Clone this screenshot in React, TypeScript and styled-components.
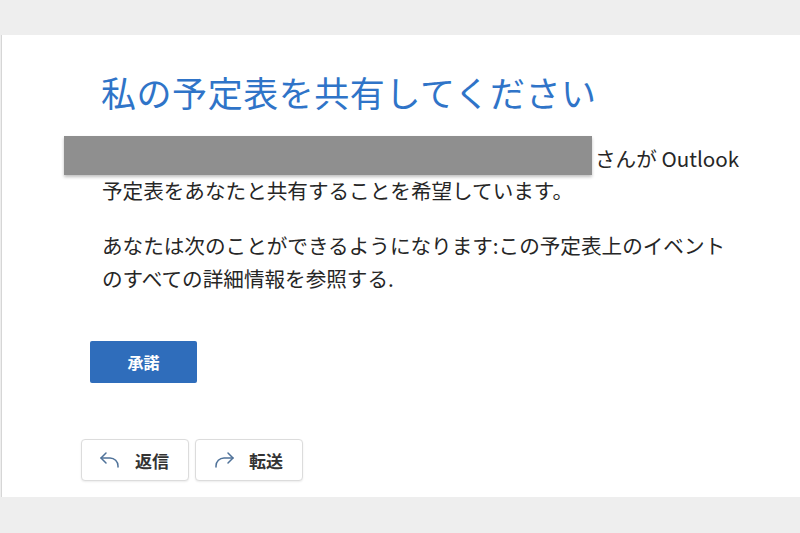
import styled, { createGlobalStyle } from "styled-components";

const GlobalStyle = createGlobalStyle`
  html, body {
    margin: 0;
    padding: 0;
    background: #eeeeee;
  }
  body {
    font-family: "Noto Sans CJK JP", "Noto Sans", sans-serif;
  }
`;

export default function App() {
  return (
    <>
      <GlobalStyle />
      <Page>
        <Card>
          <Title>私の予定表を共有してください</Title>
          <Paragraph>
            <Redacted />
            さんが Outlook
            <br />
            予定表をあなたと共有することを希望しています。
          </Paragraph>
          <Paragraph $gap={23} $lh={33}>
            あなたは次のことができるようになります:この予定表上のイベント
            <br />
            のすべての詳細情報を参照する.
          </Paragraph>
          <AcceptButton>承諾</AcceptButton>
          <Actions>
            <ActionButton>
              <ArrowIcon dir="back" />
              返信
            </ActionButton>
            <ActionButton>
              <ArrowIcon dir="forward" />
              転送
            </ActionButton>
          </Actions>
        </Card>
      </Page>
    </>
  );
}

function ArrowIcon({ dir }: { dir: "back" | "forward" }) {
  const flip = dir === "forward" ? "scale(-1 1) translate(-24 0)" : undefined;
  return (
    <svg
      width="24"
      height="24"
      viewBox="0 0 24 24"
      fill="none"
      stroke="#4f7299"
      strokeWidth="1.5"
      strokeLinecap="round"
      strokeLinejoin="round"
    >
      <g transform={flip}>
        <path d="M8 5 L3 10 L8 15" />
        <path d="M3 10 H12 a8 8 0 0 1 8 8 v1" />
      </g>
    </svg>
  );
}

const Page = styled.div`
  width: 800px;
  height: 533px;
  padding-top: 35px;
  box-sizing: border-box;
`;

const Card = styled.div`
  height: 462px;
  background: #ffffff;
  border-left: 1px solid #d6d6d6;
  margin-left: 1px;
  padding: 36px 0 0 79px;
  box-sizing: border-box;
  display: flex;
  flex-direction: column;
  align-items: flex-start;
`;

const Title = styled.h1`
  margin: 0 0 0 20px;
  font-size: 35px;
  line-height: 42px;
  font-weight: 400;
  color: #2f74c8;
  letter-spacing: 0.55px;
  white-space: nowrap;
`;

const Paragraph = styled.p<{ $gap?: number; $lh?: number }>`
  margin: ${(p) => p.$gap ?? 29}px 0 0 21px;
  font-size: 20.6px;
  line-height: ${(p) => p.$lh ?? 32}px;
  color: #262626;
  white-space: nowrap;
`;

const Redacted = styled.span`
  display: inline-block;
  position: relative;
  width: 490px;
  height: 32px;
  vertical-align: top;
  margin-right: 3px;

  &::after {
    content: "";
    position: absolute;
    left: -38px;
    right: 0;
    top: -6px;
    height: 39px;
    background: #8f8f8f;
    box-shadow: 0 2px 3px rgba(0, 0, 0, 0.25);
  }
`;

const AcceptButton = styled.button`
  margin: 46px 0 0 9px;
  width: 107px;
  height: 42px;
  border: none;
  border-radius: 2px;
  background: #2f6dbb;
  color: #ffffff;
  font-family: "Noto Sans CJK JP", sans-serif;
  font-size: 16px;
  font-weight: 700;
  padding: 0;
`;

const Actions = styled.div`
  margin-top: 56px;
  display: flex;
  gap: 6px;
`;

const ActionButton = styled.button`
  width: 108px;
  height: 42px;
  display: flex;
  align-items: center;
  gap: 13px;
  padding: 0 0 0 16px;
  background: #ffffff;
  border: 1px solid #dcdcdc;
  border-radius: 4px;
  box-shadow: 0 1px 2px rgba(0, 0, 0, 0.08);
  font-family: "Noto Sans CJK JP", sans-serif;
  font-size: 17px;
  font-weight: 700;
  color: #333333;
`;
